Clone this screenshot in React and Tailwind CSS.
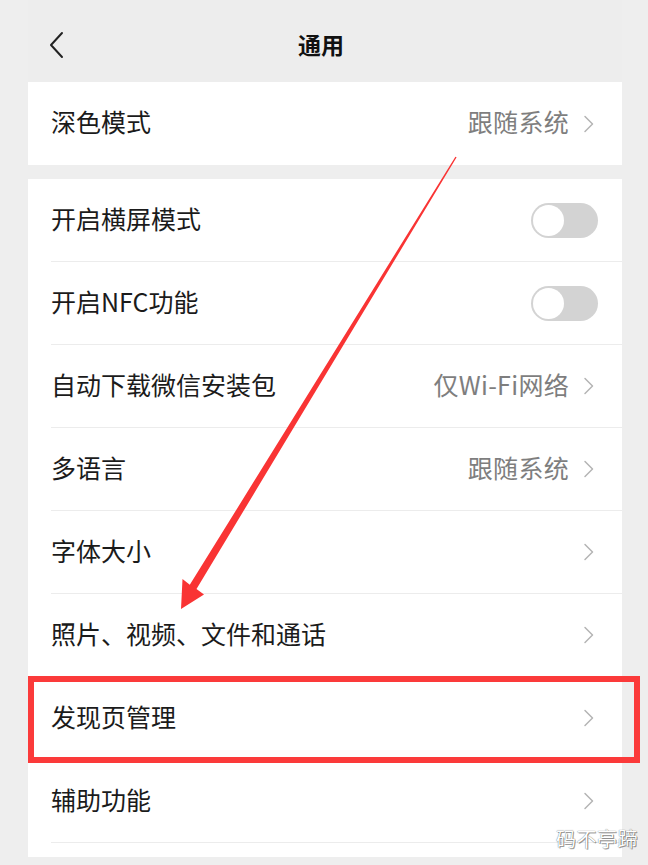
import React from 'react';

const font = { fontFamily: '"Noto Sans CJK SC", "Noto Sans", sans-serif' };

const Chevron = () => (
  <svg width="14" height="18" viewBox="0 0 14 18" className="shrink-0">
    <path d="M3 1.5 L10.5 9 L3 16.5" fill="none" stroke="#b4b4b4" strokeWidth="1.5" strokeLinecap="round" strokeLinejoin="round" />
  </svg>
);

const Toggle = () => (
  <div className="w-[67px] h-[35px] rounded-full bg-[#d3d3d3] p-[2px] flex items-center">
    <div className="w-[31px] h-[31px] rounded-full bg-white" />
  </div>
);

const Row = ({ label, value, toggle, divider = true }) => (
  <div className="h-[83px] pl-[23px] flex flex-col">
    <div className="flex-1 flex items-center pr-[26px]">
      <span className="flex-1 text-[25px] text-[#1b1b1b] pb-[3px]">{label}</span>
      {toggle ? (
        <div className="-mr-[2px]"><Toggle /></div>
      ) : (
        <div className="flex items-center gap-[13px]">
          {value && <span className="text-[25px] text-[#7e7e7e] pb-[3px] tracking-[0.3px]">{value}</span>}
          <Chevron />
        </div>
      )}
    </div>
    {divider && <div className="h-px bg-[#ececec]" />}
  </div>
);

const rows = [
  { label: '开启横屏模式', toggle: true },
  { label: '开启NFC功能', toggle: true },
  { label: '自动下载微信安装包', value: '仅Wi-Fi网络' },
  { label: '多语言', value: '跟随系统' },
  { label: '字体大小' },
  { label: '照片、视频、文件和通话' },
  { label: '发现页管理' },
  { label: '辅助功能' },
];

export default function App() {
  return (
    <div className="relative w-[648px] h-[865px] overflow-hidden bg-[#eeeeee]" style={font}>
      <div className="ml-[28px] w-[594px] flex flex-col">
        {/* header */}
        <div className="h-[82px] relative flex items-center justify-center bg-[#ededed]">
          <svg width="18" height="28" viewBox="0 0 18 28" className="absolute left-[20px] top-[31px]">
            <path d="M14 2 L3 14 L14 26" fill="none" stroke="#222" strokeWidth="2" strokeLinecap="round" strokeLinejoin="round" />
          </svg>
          <span className="text-[23px] font-bold text-[#111] -ml-[8px] mt-[6px]">通用</span>
        </div>

        <div className="bg-white">
          <Row label="深色模式" value="跟随系统" divider={false} />
        </div>

        <div className="h-[14px]" />

        <div className="bg-white pb-[14px]">
          {rows.map((r) => (
            <Row key={r.label} {...r} />
          ))}
        </div>
      </div>

      {/* annotation: red box */}
      <div className="absolute left-[28px] top-[676px] w-[612px] h-[87px] border-[6px] border-[#fb3a3a]" />

      {/* annotation: red arrow */}
      <svg className="absolute left-0 top-0" width="648" height="865" viewBox="0 0 648 865">
        <polygon
          points="456.6,157.3 196.5,589 204,594.5 181,609 182.5,579 189.8,584.8 455.4,156.7"
          fill="#f93434"
        />
      </svg>

      {/* watermark */}
      <span
        className="absolute left-[556px] top-[829px] text-[20px] leading-none text-white tracking-[0.5px]"
        style={{ textShadow: '0 0 1px rgba(0,0,0,0.7), 1px 1px 0 rgba(0,0,0,0.35)' }}
      >
        码不亭蹄
      </span>
    </div>
  );
}
